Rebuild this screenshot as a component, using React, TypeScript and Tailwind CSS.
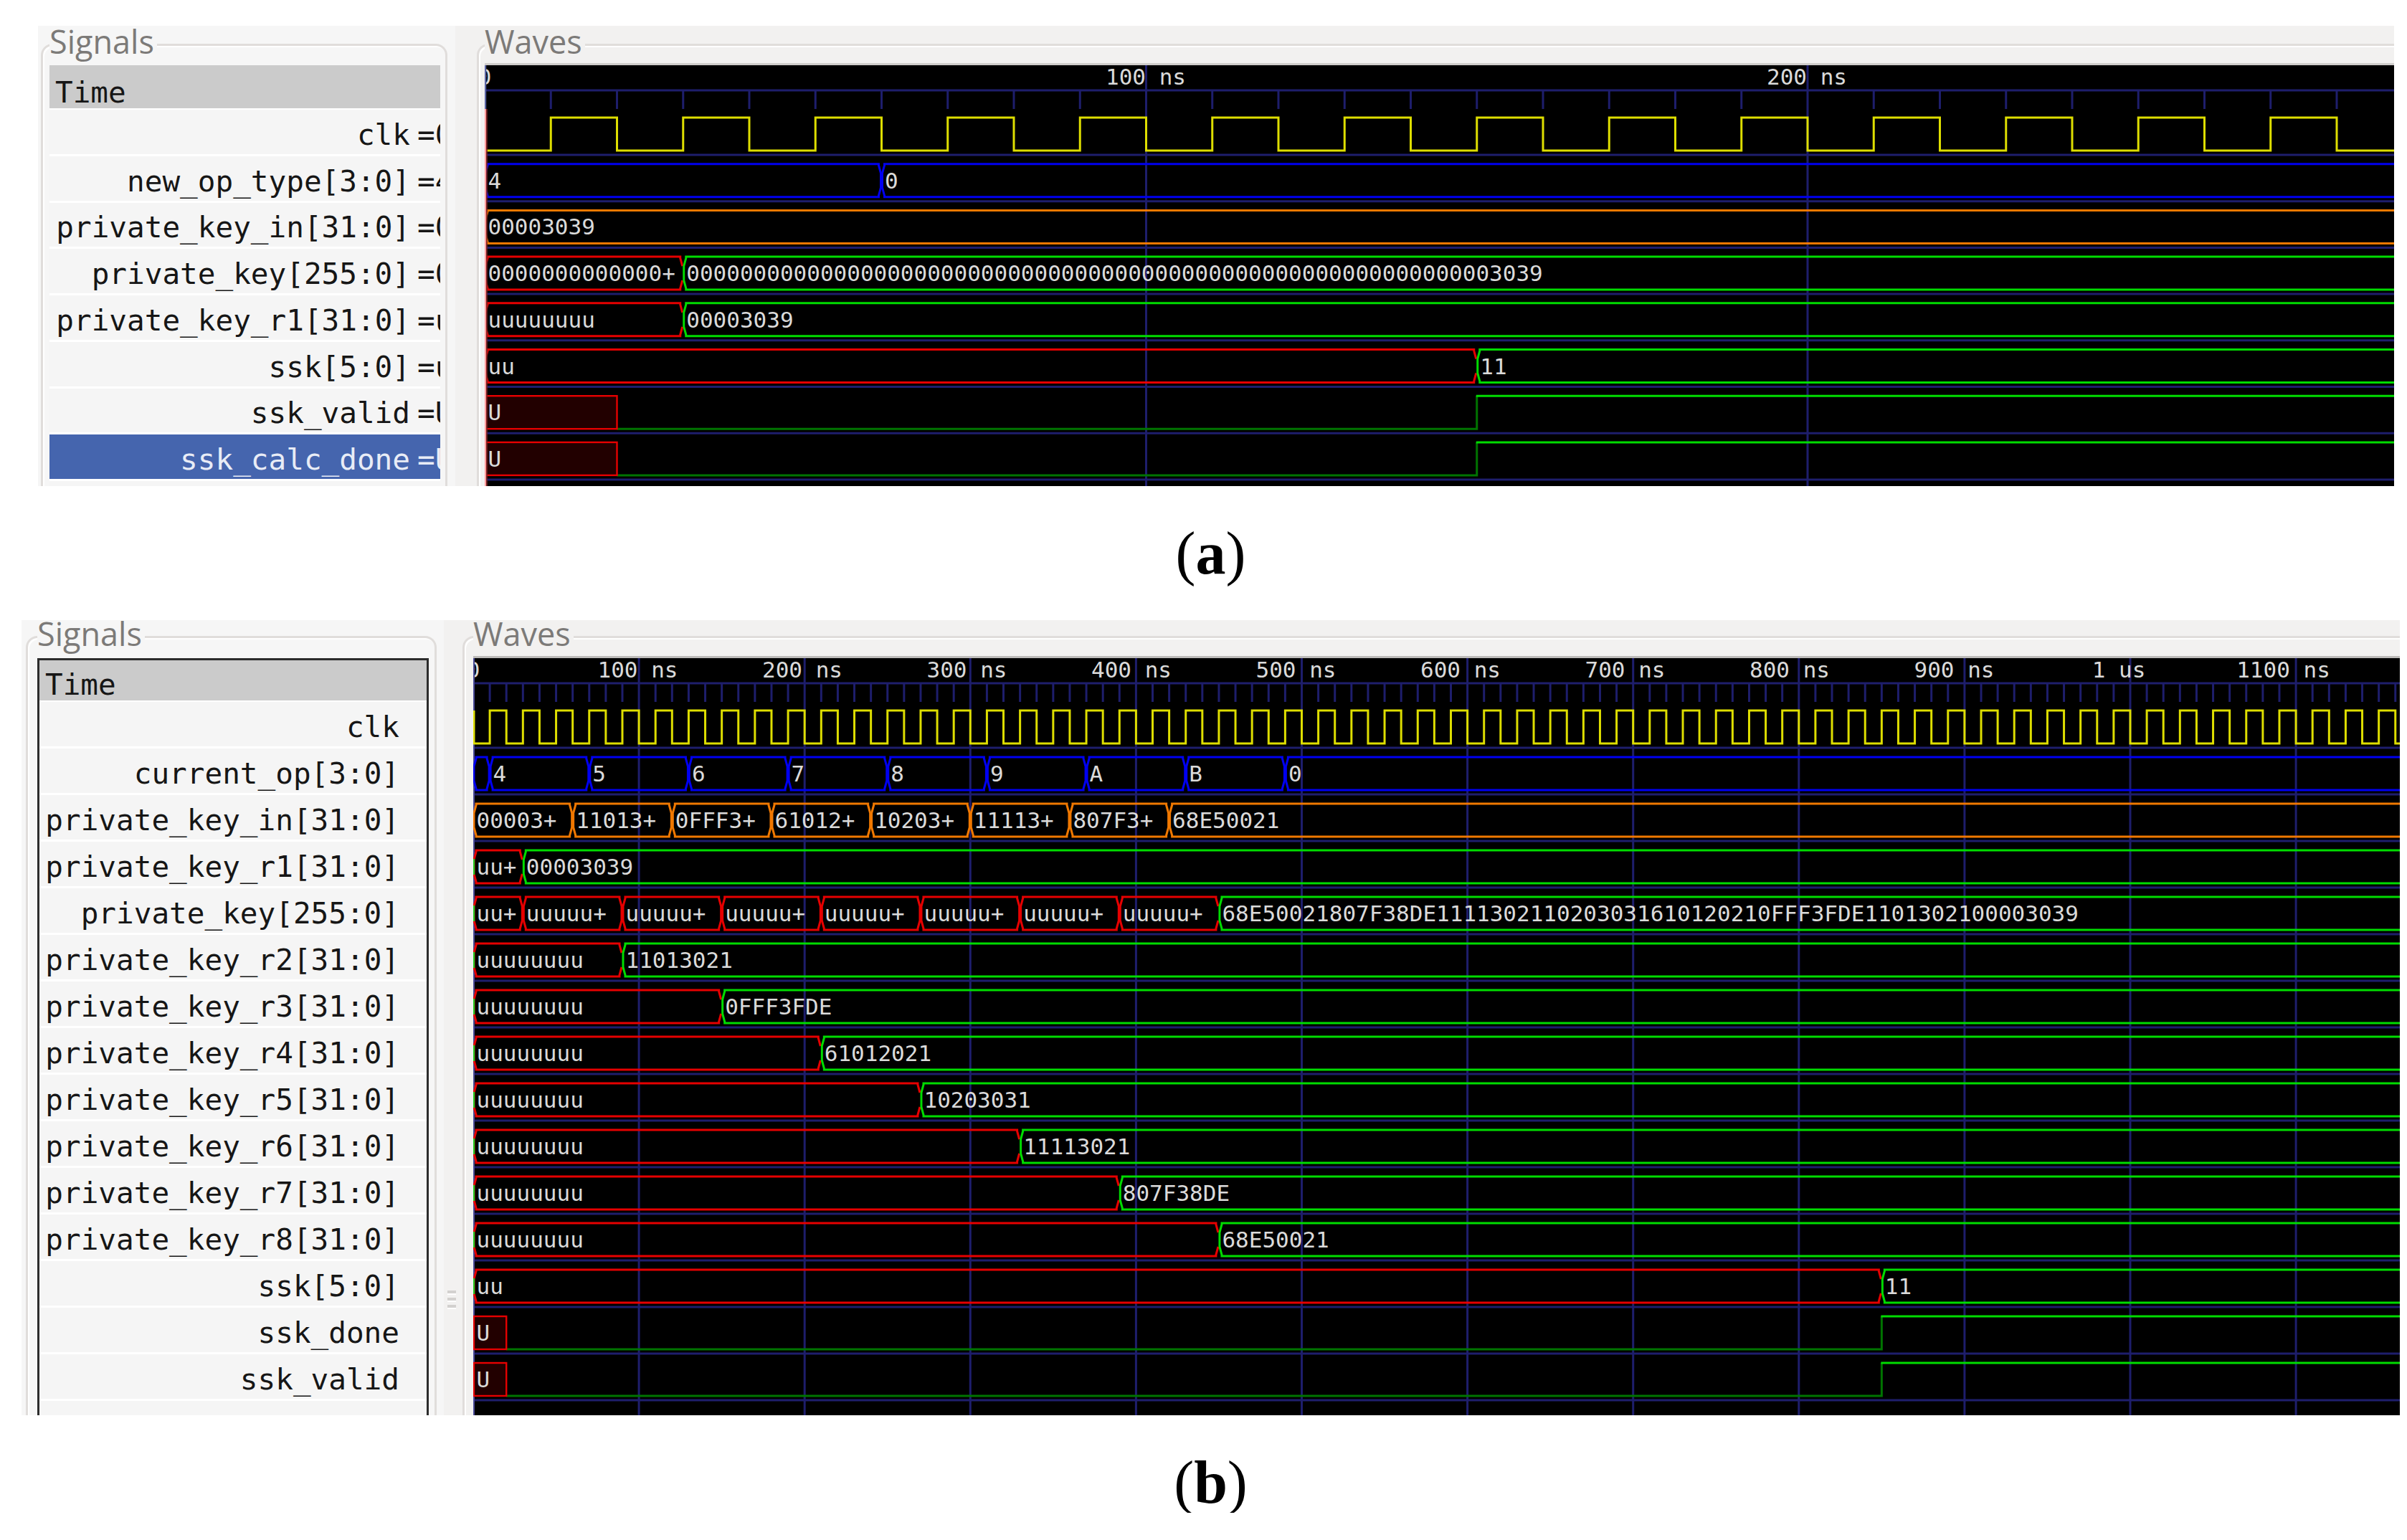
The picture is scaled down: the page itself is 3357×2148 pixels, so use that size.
import type { ReactNode } from "react";
import { clsx } from "clsx";

const MONO = "'DejaVu Sans Mono', monospace";

const COLORS = {
  grid: "#1e1e6c",
  text: "#dadada",
  yellow: "#dede00",
  blue: "#0000f0",
  orange: "#f07800",
  red: "#e60000",
  green: "#00dc00",
  low: "#007400",
  undefFill: "#220000",
};

type BusColor = "blue" | "orange" | "red" | "green";

interface Segment {
  from: number;
  label?: string;
  color: BusColor;
}

type Trace =
  | { kind: "clock"; startHigh?: boolean }
  | { kind: "bus"; segments: Segment[] }
  | { kind: "bit"; rise: number };

interface Signal {
  name: string;
  value?: string;
  selected?: boolean;
  trace: Trace;
}

interface Scope {
  signals: Signal[];
  // pixels per nanosecond
  scale: number;
  end: number;
  rowHeight: number;
  height: number;
  labelStep: number;
  cursor?: boolean;
}

const FIRST_DIVIDER = 125;
const RULER_Y = 35;
const TICK_END = 61;

const bus = (...segments: Segment[]): Trace => ({ kind: "bus", segments });
const seg = (from: number, color: BusColor, label?: string): Segment => ({ from, color, label });

const shortRun: Scope = {
  scale: 9.225,
  end: 290,
  rowHeight: 64.7,
  height: 587,
  labelStep: 922,
  cursor: true,
  signals: [
    { name: "clk", value: "=0", trace: { kind: "clock" } },
    { name: "new_op_type[3:0]", value: "=4", trace: bus(seg(0, "blue", "4"), seg(60, "blue", "0")) },
    { name: "private_key_in[31:0]", value: "=0", trace: bus(seg(0, "orange", "00003039")) },
    {
      name: "private_key[255:0]",
      value: "=0",
      trace: bus(seg(0, "red", "0000000000000+"), seg(30, "green", "0".repeat(60) + "3039")),
    },
    {
      name: "private_key_r1[31:0]",
      value: "=u",
      trace: bus(seg(0, "red", "uuuuuuuu"), seg(30, "green", "00003039")),
    },
    { name: "ssk[5:0]", value: "=u", trace: bus(seg(0, "red", "uu"), seg(150, "green", "11")) },
    { name: "ssk_valid", value: "=U", trace: { kind: "bit", rise: 150 } },
    { name: "ssk_calc_done", value: "=U", selected: true, trace: { kind: "bit", rise: 150 } },
  ],
};

const register = (n: number, at: number, value: string): Signal => ({
  name: `private_key_r${n}[31:0]`,
  trace: bus(seg(0, "red", "uuuuuuuu"), seg(at, "green", value)),
});

const longRun: Scope = {
  scale: 2.311,
  end: 1170,
  rowHeight: 65,
  height: 1056,
  labelStep: 229.5,
  signals: [
    { name: "clk", trace: { kind: "clock", startHigh: true } },
    {
      name: "current_op[3:0]",
      trace: bus(
        seg(0, "blue"),
        seg(10, "blue", "4"),
        seg(70, "blue", "5"),
        seg(130, "blue", "6"),
        seg(190, "blue", "7"),
        seg(250, "blue", "8"),
        seg(310, "blue", "9"),
        seg(370, "blue", "A"),
        seg(430, "blue", "B"),
        seg(490, "blue", "0"),
      ),
    },
    {
      name: "private_key_in[31:0]",
      trace: bus(
        seg(0, "orange", "00003+"),
        seg(60, "orange", "11013+"),
        seg(120, "orange", "0FFF3+"),
        seg(180, "orange", "61012+"),
        seg(240, "orange", "10203+"),
        seg(300, "orange", "11113+"),
        seg(360, "orange", "807F3+"),
        seg(420, "orange", "68E50021"),
      ),
    },
    {
      name: "private_key_r1[31:0]",
      trace: bus(seg(0, "red", "uu+"), seg(30, "green", "00003039")),
    },
    {
      name: "private_key[255:0]",
      trace: bus(
        seg(0, "red", "uu+"),
        seg(30, "red", "uuuuu+"),
        seg(90, "red", "uuuuu+"),
        seg(150, "red", "uuuuu+"),
        seg(210, "red", "uuuuu+"),
        seg(270, "red", "uuuuu+"),
        seg(330, "red", "uuuuu+"),
        seg(390, "red", "uuuuu+"),
        seg(450, "green", "68E50021807F38DE1111302110203031610120210FFF3FDE1101302100003039"),
      ),
    },
    register(2, 90, "11013021"),
    register(3, 150, "0FFF3FDE"),
    register(4, 210, "61012021"),
    register(5, 270, "10203031"),
    register(6, 330, "11113021"),
    register(7, 390, "807F38DE"),
    register(8, 450, "68E50021"),
    { name: "ssk[5:0]", trace: bus(seg(0, "red", "uu"), seg(850, "green", "11")) },
    { name: "ssk_done", trace: { kind: "bit", rise: 850 } },
    { name: "ssk_valid", trace: { kind: "bit", rise: 850 } },
  ],
};

function ClockTrace({ scope, top, bottom, startHigh }: { scope: Scope; top: number; bottom: number; startHigh?: boolean }) {
  let d = startHigh ? `M1 ${top}V${bottom}` : `M0 ${bottom}`;
  for (let t = 10; t <= scope.end; t += 10) {
    d += `H${t * scope.scale}V${t % 20 === 10 ? top : bottom}`;
  }
  return <path d={d} fill="none" stroke={COLORS.yellow} strokeWidth={3} />;
}

function BusTrace({ scope, segments, top, bottom }: { scope: Scope; segments: Segment[]; top: number; bottom: number }) {
  const bend = 13;
  return (
    <>
      {segments.map((s, i) => {
        const next = segments[i + 1];
        const x0 = s.from * scope.scale;
        const x1 = (next ? next.from : scope.end) * scope.scale;
        // opening edge on the left, closing edge on the right, joined by the two rails
        const d =
          `M${x1 - 1} ${top + bend}L${x1 - 4} ${top + 2}V${top}H${x0 + 4}V${top + 2}L${x0 + 1} ${top + bend}` +
          `V${bottom - bend}L${x0 + 4} ${bottom - 2}V${bottom}H${x1 - 4}V${bottom - 2}L${x1 - 1} ${bottom - bend}` +
          (next && next.color === s.color ? "Z" : "");
        return (
          <g key={s.from}>
            <path d={d} fill="none" stroke={COLORS[s.color]} strokeWidth={3} />
            {s.label ? (
              <text x={x0 + 4.5} y={bottom - 12} fill={COLORS.text}>
                {s.label}
              </text>
            ) : null}
          </g>
        );
      })}
    </>
  );
}

function BitTrace({ scope, rise, top, bottom }: { scope: Scope; rise: number; top: number; bottom: number }) {
  const known = 20 * scope.scale;
  const up = rise * scope.scale;
  return (
    <>
      <path d={`M${known} ${bottom}H${up}V${top}`} fill="none" stroke={COLORS.low} strokeWidth={3} />
      <path d={`M${up - 1} ${top}H${scope.end * scope.scale}`} stroke={COLORS.green} strokeWidth={3} />
      <rect
        x={1}
        y={top}
        width={known - 1}
        height={bottom - top}
        fill={COLORS.undefFill}
        stroke={COLORS.red}
        strokeWidth={2.4}
      />
      <text x={4.5} y={bottom - 12} fill={COLORS.text}>
        U
      </text>
    </>
  );
}

function timeLabel(t: number) {
  if (t === 0) return "0";
  return t % 1000 === 0 ? `${t / 1000} us` : `${t} ns`;
}

function WaveCanvas({ scope }: { scope: Scope }) {
  const { scale, end, rowHeight, height } = scope;
  const width = end * scale;
  const ticks = Array.from({ length: end / 10 + 1 }, (_, i) => i * 10);
  const major = ticks.filter((t) => t % 100 === 0);

  return (
    <svg
      className="block w-full overflow-hidden bg-black"
      height={height}
      fontFamily={MONO}
      fontSize={31}
      role="img"
      aria-label="Waves"
    >
      <g stroke={COLORS.grid} strokeWidth={3}>
        <path d={`M0 ${RULER_Y}H${width}`} />
        {ticks.map((t) => (
          <path key={t} d={t % 100 === 0 ? `M${t * scale} 0V${height}` : `M${t * scale} ${RULER_Y}V${TICK_END}`} />
        ))}
        {scope.signals.map((s, i) => (
          <path key={s.name} d={`M0 ${FIRST_DIVIDER + i * rowHeight}H${width}`} />
        ))}
      </g>
      {major.map((t, i) => (
        <text key={t} x={i * scope.labelStep} y={27} textAnchor="middle" fill={COLORS.text}>
          {timeLabel(t)}
        </text>
      ))}
      {scope.cursor ? null : <path d={`M1 0V${height}`} stroke="#4a4a96" strokeWidth={2} />}
      {scope.signals.map(({ name, trace }, i) => {
        const bottom = FIRST_DIVIDER - 6 + i * rowHeight;
        const top = bottom - 46;
        if (trace.kind === "clock") {
          return <ClockTrace key={name} scope={scope} top={top} bottom={bottom} startHigh={trace.startHigh} />;
        }
        if (trace.kind === "bus") {
          return <BusTrace key={name} scope={scope} segments={trace.segments} top={top} bottom={bottom} />;
        }
        return <BitTrace key={name} scope={scope} rise={trace.rise} top={top} bottom={bottom} />;
      })}
      {scope.cursor ? (
        <>
          <path d={`M1 0V${TICK_END}`} stroke="#5c66a4" strokeWidth={2.4} />
          <path d={`M1 ${TICK_END}V${height}`} stroke="#ff9c9c" strokeWidth={2.4} />
          <path d={`M3 ${TICK_END}V${height}`} stroke="#7a2020" strokeWidth={1.6} />
        </>
      ) : (
        scope.signals.map(({ name, trace }, i) => {
          if (trace.kind !== "bus" || trace.segments[0].color !== "red") return null;
          const mid = FIRST_DIVIDER - 29 + i * rowHeight;
          return <path key={name} d={`M1 ${mid - 11}V${mid + 11}`} stroke="#20c820" strokeWidth={2.4} />;
        })
      )}
    </svg>
  );
}

function SignalList({ scope, bordered }: { scope: Scope; bordered?: boolean }) {
  return (
    <div
      className={clsx(
        "flex-1 bg-[#f5f5f5] font-['DejaVu_Sans_Mono',monospace] text-[41px] text-[#161616]",
        bordered ? "mt-[7px] border-[3px] border-b-0 border-[#2c2c2c]" : "mt-[3px]",
      )}
    >
      <div
        className={clsx(
          "flex items-end border-b-2 border-white bg-[#cbcbcb] px-2 leading-[43px]",
          bordered ? "h-[58px]" : "h-[62px]",
        )}
      >
        Time
      </div>
      <ul className={clsx("grid auto-rows-fr", bordered ? "h-[975px]" : "h-[518px]")}>
        {scope.signals.map((s) => (
          <li
            key={s.name}
            className={clsx(
              "flex items-center border-b-[3px] border-white pt-2 leading-[48px] whitespace-nowrap",
              s.selected && "bg-[#4565ae] text-[#e8ecf6]",
              bordered && "pr-7",
            )}
          >
            <span className="flex min-w-0 flex-1 justify-end pr-[10px]">{s.name}</span>
            {s.value ? <span className="w-8 overflow-hidden">{s.value}</span> : null}
          </li>
        ))}
      </ul>
    </div>
  );
}

function Group({ title, className, legendClassName, children }: {
  title: string;
  className: string;
  legendClassName: string;
  children: ReactNode;
}) {
  return (
    <fieldset
      className={clsx(
        "flex min-w-0 flex-col border-[3px] border-b-0 border-[#e0dddb] shadow-[inset_2px_2px_0_#ffffff]",
        className,
      )}
    >
      <legend
        className={clsx(
          "pr-1 pb-2 font-['Open_Sans',sans-serif] text-[45px] text-[#7c7a78]",
          legendClassName,
        )}
      >
        {title}
      </legend>
      {children}
    </fieldset>
  );
}

function Caption({ letter }: { letter: string }) {
  return (
    <figcaption className="pt-[52px] text-center font-['Liberation_Serif',serif] text-[84px] leading-[84px] text-black">
      (<b>{letter}</b>)
    </figcaption>
  );
}

export default function App() {
  return (
    <main className="bg-white pt-9 pr-[10px] pl-[30px]">
      <figure className="mb-[51px]">
        <div className="flex h-[642px] pr-2 pl-[23px]">
          <div className="flex w-[582px] shrink-0 bg-[#f6f6f6] pr-[11px] pl-1">
            <Group
              title="Signals"
              className="flex-1 rounded-t-2xl pr-[7px] pl-[9px]"
              legendClassName="bg-[#f6f6f6] leading-[44px]"
            >
              <SignalList scope={shortRun} />
            </Group>
          </div>
          <div className="w-[30px] shrink-0 bg-[#f2f1f0]" />
          <div className="flex min-w-0 flex-1 bg-[#f2f1f0]">
            <Group
              title="Waves"
              className="flex-1 rounded-tl-2xl border-r-0 pl-2"
              legendClassName="bg-[#f2f1f0] leading-[44px]"
            >
              <div className="border-t-[3px] border-[#cfcdcb]">
                <WaveCanvas scope={shortRun} />
              </div>
            </Group>
          </div>
        </div>
        <Caption letter="a" />
      </figure>

      <figure>
        <div className="flex h-[1109px]">
          <div className="flex w-[589px] shrink-0 bg-[#f6f6f6] pr-[10px] pl-[6px]">
            <Group
              title="Signals"
              className="flex-1 rounded-t-2xl pr-2 pl-[13px]"
              legendClassName="bg-[#f6f6f6] leading-[38px]"
            >
              <SignalList scope={longRun} bordered />
            </Group>
          </div>
          {/* drag handle between the two panes */}
          <div className="flex w-[26px] shrink-0 flex-col items-center justify-end gap-1 bg-[#f2f1f0] pr-1 pb-[148px]">
            <span className="h-[6px] w-3 border-b-2 border-white bg-[#d3d1cf]" />
            <span className="h-[6px] w-3 border-b-2 border-white bg-[#d3d1cf]" />
            <span className="h-[6px] w-3 border-b-2 border-white bg-[#d3d1cf]" />
          </div>
          <div className="flex min-w-0 flex-1 bg-[#f2f1f0]">
            <Group
              title="Waves"
              className="flex-1 rounded-tl-2xl border-r-0 pl-3"
              legendClassName="bg-[#f2f1f0] leading-[38px]"
            >
              <div className="mt-1 border-t-[3px] border-[#bdbbb9]">
                <WaveCanvas scope={longRun} />
              </div>
            </Group>
          </div>
        </div>
        <Caption letter="b" />
      </figure>
    </main>
  );
}
